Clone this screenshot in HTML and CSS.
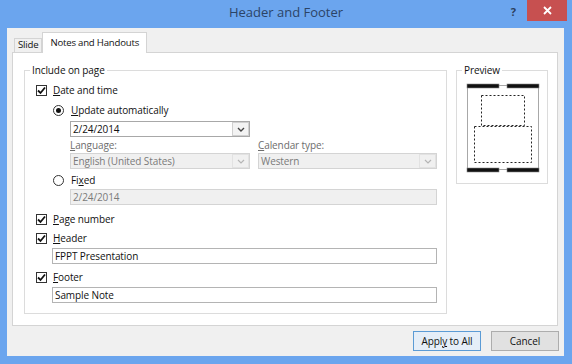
FILE: index.html
```html
<!DOCTYPE html>
<html>
<head>
<meta charset="utf-8">
<link rel="stylesheet" href="styles.css">
</head>
<body>
<div class="window">
  <div class="titlebar">
    <div></div>
    <div class="title">Header and Footer</div>
    <div class="controls">
      <span class="help">?</span>
      <span class="close"><svg width="9" height="9" viewBox="0 0 9 9"><path d="M1 1L8 8M8 1L1 8" stroke="#fff" stroke-width="1.8"/></svg></span>
    </div>
  </div>
  <div class="client">
    <div class="tabs">
      <div class="tab">Slide</div>
      <div class="tab active">Notes and Handouts</div>
    </div>
    <div class="panel">
      <div class="group main">
        <div class="legend">Include on page</div>
        <div class="row r-date"><span class="cb"><svg width="9" height="9" viewBox="0 0 9 9"><path d="M1 4.5L3.5 7L8 1.5" fill="none" stroke="#111" stroke-width="1.8"/></svg></span><span><u>D</u>ate and time</span></div>
        <div class="row r-radio"><span class="rb on"></span><span><u>U</u>pdate automatically</span></div>
        <div class="combo c-date"><span class="val">2/24/2014</span><span class="drop"><svg width="8" height="5" viewBox="0 0 8 5"><path d="M1 1L4 4L7 1" fill="none" stroke="#444" stroke-width="1.4"/></svg></span></div>
        <div class="pair labels"><span class="dis"><u>L</u>anguage:</span><span class="dis"><u>C</u>alendar type:</span></div>
        <div class="pair">
          <div class="combo disabled"><span class="val">English (United States)</span><span class="drop"><svg width="8" height="5" viewBox="0 0 8 5"><path d="M1 1L4 4L7 1" fill="none" stroke="#b5b5b5" stroke-width="1.2"/></svg></span></div>
          <div class="combo disabled"><span class="val">Western</span><span class="drop"><svg width="8" height="5" viewBox="0 0 8 5"><path d="M1 1L4 4L7 1" fill="none" stroke="#b5b5b5" stroke-width="1.2"/></svg></span></div>
        </div>
        <div class="row r-radio r-fixed"><span class="rb"></span><span>Fi<u>x</u>ed</span></div>
        <div class="textbox t-fixed disabled">2/24/2014</div>
        <div class="row r-page"><span class="cb"><svg width="9" height="9" viewBox="0 0 9 9"><path d="M1 4.5L3.5 7L8 1.5" fill="none" stroke="#111" stroke-width="1.8"/></svg></span><span><u>P</u>age number</span></div>
        <div class="row r-header"><span class="cb"><svg width="9" height="9" viewBox="0 0 9 9"><path d="M1 4.5L3.5 7L8 1.5" fill="none" stroke="#111" stroke-width="1.8"/></svg></span><span><u>H</u>eader</span></div>
        <div class="textbox t-wide">FPPT Presentation</div>
        <div class="row r-footer"><span class="cb"><svg width="9" height="9" viewBox="0 0 9 9"><path d="M1 4.5L3.5 7L8 1.5" fill="none" stroke="#111" stroke-width="1.8"/></svg></span><span><u>F</u>ooter</span></div>
        <div class="textbox t-wide t-foot">Sample Note</div>
      </div>
      <div class="group preview">
        <div class="legend">Preview</div>
        <svg class="page" width="76" height="94" viewBox="0 0 76 94">
          <rect x="2.5" y="3.5" width="71" height="84" fill="#fff" stroke="#a8a8a8"/>
          <rect x="16.5" y="13.5" width="43" height="30" fill="none" stroke="#222" stroke-dasharray="2 2"/>
          <rect x="9.5" y="44.5" width="57" height="36" fill="none" stroke="#222" stroke-dasharray="2 2"/>
          <rect x="2" y="2" width="32" height="4" fill="#111" stroke="#888" stroke-width="0.6"/>
          <rect x="42" y="2" width="32" height="4" fill="#111" stroke="#888" stroke-width="0.6"/>
          <rect x="2" y="86" width="32" height="4" fill="#111" stroke="#888" stroke-width="0.6"/>
          <rect x="42" y="86" width="32" height="4" fill="#111" stroke="#888" stroke-width="0.6"/>
        </svg>
      </div>
    </div>
    <div class="buttons">
      <div class="btn default">Appl<u>y</u> to All</div>
      <div class="btn">Cancel</div>
    </div>
  </div>
</div>
</body>
</html>
```
FILE: styles.css
```css
* { box-sizing: border-box; }
html, body { margin: 0; padding: 0; }
body {
  width: 572px;
  height: 364px;
  overflow: hidden;
  background: #6ba5ee;
  font-family: "Open Sans", "Noto Sans", "DejaVu Sans", sans-serif;
  font-size: 10px;
  letter-spacing: -0.1px;
  color: #111;
}
u { text-decoration: underline; text-underline-offset: 1px; }
.window { display: flex; flex-direction: column; height: 364px; }
.titlebar {
  height: 28px;
  display: grid;
  grid-template-columns: 1fr auto 1fr;
}
.title {
  font-size: 13px;
  letter-spacing: 0;
  line-height: 25px;
  color: #2b4466;
}
.controls { display: flex; justify-content: flex-end; align-items: flex-start; }
.help {
  font-weight: bold;
  font-size: 11px;
  color: #2b3f5c;
  line-height: 14px;
  margin-top: 5px;
  margin-right: 11px;
}
.close {
  width: 40px;
  height: 21px;
  background: #c75050;
  display: flex;
  align-items: center;
  justify-content: center;
  margin-right: 5px;
}
.client {
  flex: 1;
  margin: 0 8px 8px 7px;
  background: #f0f0f0;
  display: flex;
  flex-direction: column;
  padding-top: 4px;
}
.tabs {
  display: flex;
  align-items: flex-end;
  height: 20px;
  padding-left: 7px;
  position: relative;
  z-index: 1;
}
.tab {
  height: 14px;
  border: 1px solid #d4d4d4;
  border-bottom: none;
  background: #f0f0f0;
  padding: 0 3px;
  line-height: 12px;
  font-size: 9.6px;
  letter-spacing: -0.2px;
}
.tab.active {
  height: 21px;
  margin-bottom: -1px;
  background: #fff;
  padding: 2px 7px 0;
  line-height: 16px;
}
.panel {
  height: 274px;
  margin: 0 6px 0 5px;
  border: 1px solid #d4d4d4;
  background: #fff;
  display: flex;
  align-items: flex-start;
  gap: 9px;
  padding: 17px 9px 0 11px;
}
.group { border: 1px solid #dcdcdc; }
.main { width: 424px; height: 244px; padding: 0 9px 0 11px; }
.preview { width: 93px; height: 114px; }
.legend {
  margin: -9px 0 0 -6px;
  padding: 0 2px;
  background: #fff;
  line-height: 16px;
  width: fit-content;
}
.preview .legend { margin-left: 5px; }
.page { display: block; margin: 4px 0 0 8px; }
.row { display: flex; align-items: center; gap: 6px; height: 18px; }
.r-date { margin-top: 3px; }
.r-radio { margin-top: 2px; padding-left: 17px; gap: 7px; }
.r-page { margin-top: 5px; }
.r-header { margin-top: 1px; }
.r-footer { margin-top: 4px; }
.cb {
  width: 11px; height: 11px;
  border: 1px solid #333;
  background: #fff;
  display: flex; align-items: center; justify-content: center;
}
.rb {
  width: 11px; height: 11px;
  border: 1px solid #333;
  border-radius: 50%;
  background: #fff;
  display: flex; align-items: center; justify-content: center;
}
.rb.on::after {
  content: "";
  width: 5px; height: 5px;
  border-radius: 50%;
  background: #111;
}
.combo {
  height: 16px;
  border: 1px solid #a8a8a8;
  background: #fff;
  display: flex;
  align-items: stretch;
}
.combo .val { flex: 1; padding-left: 2px; line-height: 14px; white-space: nowrap; overflow: hidden; }
.combo .drop {
  width: 17px;
  border: 1px solid #d0d0d0;
  background: #f3f3f3;
  display: flex; align-items: center; justify-content: center;
}
.c-date { margin: 2px 0 0 34px; width: 180px; }
.pair {
  margin-left: 34px;
  display: grid;
  grid-template-columns: 180px 179px;
  gap: 8px;
}
.labels { line-height: 16px; height: 16px; }
.dis { color: #6d6d6d; }
.combo.disabled { background: #f0f0f0; border-color: #d4d4d4; color: #7a7a7a; }
.combo.disabled .drop { border-color: #e2e2e2; background: #f0f0f0; }
.textbox {
  height: 16px;
  border: 1px solid #b4b4b4;
  background: #fff;
  padding-left: 2px;
  line-height: 14px;
}
.textbox.disabled { background: #f0f0f0; border-color: #d4d4d4; color: #7a7a7a; }
.t-fixed { margin-left: 34px; width: 367px; }
.t-wide { margin: 1px 0 0 16px; width: 385px; }
.buttons {
  display: flex;
  justify-content: flex-end;
  gap: 10px;
  margin-top: 5px;
  padding-right: 5px;
}
.btn {
  width: 68px;
  height: 20px;
  border: 1px solid #adadad;
  background: #e1e1e1;
  text-align: center;
  line-height: 18px;
}
.btn.default { border-color: #5b9bd5; background: #e5eef8; }
```
